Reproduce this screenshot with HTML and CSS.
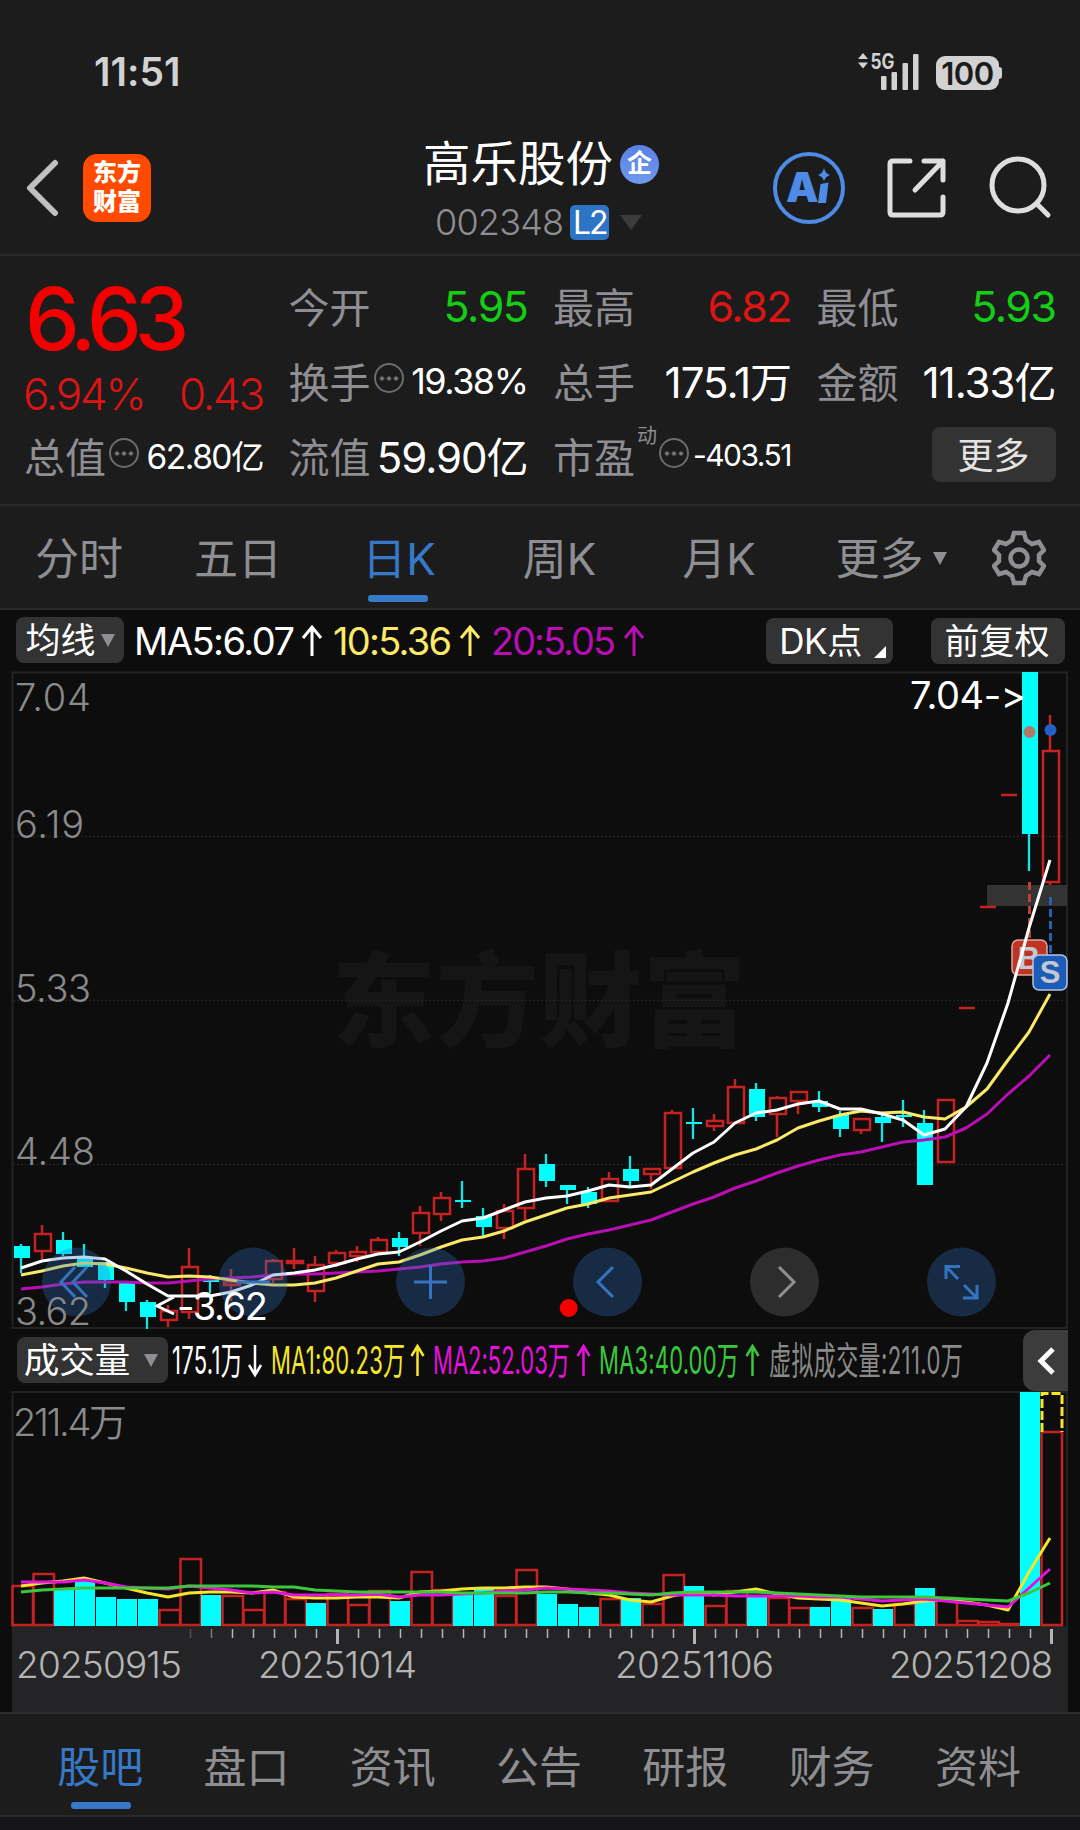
FILE: index.html
```html
<!DOCTYPE html>
<html lang="zh-CN">
<head>
  <meta charset="UTF-8" />
  <meta name="viewport" content="width=device-width, initial-scale=1.0"/>
  <title>高乐股份 002348</title>
  <link rel="stylesheet" href="styles.css">
</head>
<body>

<div class="status-bar">
  <span class="time">11:51</span>
  <div class="status-icons">
    <svg class="signal" width="64" height="40" viewBox="0 0 64 40">
      <path d="M2 9 L7 3 L12 9 Z M2 12.500 L7 18.500 L12 12.500 Z"/>
      <text x="14.500" y="18.500" textLength="24" lengthAdjust="spacingAndGlyphs">5G</text>
      <rect x="25" y="26" width="5.500" height="14" rx="1"/>
      <rect x="35.500" y="22" width="5.500" height="18" rx="1"/>
      <rect x="46.500" y="13" width="5.500" height="27" rx="1"/>
      <rect x="57" y="4" width="5.500" height="36" rx="1"/>
    </svg>
    <div class="battery"><span>100</span></div>
  </div>
</div>

<header class="header">
  <div class="header-left">
    <svg class="back" width="34" height="60" viewBox="0 0 34 60"><path d="M29 5 L4 30 L29 55"/></svg>
    <div class="logo"><span>东方</span><span>财富</span></div>
  </div>
  <div class="header-title">
    <h1>高乐股份<span class="qi">企</span></h1>
    <div class="code"><span>002348</span><span class="l2">L2</span><i class="tri"></i></div>
  </div>
  <div class="header-right">
    <svg width="74" height="74" viewBox="0 0 74 74">
      <circle class="ai-ring" cx="37" cy="37" r="34"/>
      <text class="ai-text" x="14" y="51" textLength="29">A</text>
      <path class="ai-fill" d="M48.500 33 L56.500 31.500 L54 52 L46 52 Z M52 17 Q53.500 22.500 58 24 Q53.500 25.500 52 30 Q50.500 25.500 46 24 Q50.500 22.500 52 17 Z"/>
    </svg>
    <svg class="line-icon" width="62" height="62" viewBox="0 0 62 62">
      <path d="M24 4 H7 Q4 4 4 7 V55 Q4 58 7 58 H54 Q57 58 57 55 V40 M38 4 H57 V23 M57 4 L29 33"/>
    </svg>
    <svg class="line-icon" width="64" height="64" viewBox="0 0 64 64">
      <circle cx="30" cy="29" r="26"/><path d="M49 48 L60 59"/>
    </svg>
  </div>
</header>

<section class="quote">
  <div class="price">6.63</div>
  <div class="change"><span>6.94%</span><span>0.43</span></div>
  <div class="cell open"><label>今开</label><b class="down">5.95</b></div>
  <div class="cell"><label>最高</label><b class="up">6.82</b></div>
  <div class="cell"><label>最低</label><b class="down">5.93</b></div>
  <div class="cell turn"><label>换手</label><i class="more"></i><b class="mid">19.38%</b></div>
  <div class="cell"><label>总手</label><b class="wide">175.1万</b></div>
  <div class="cell"><label>金额</label><b class="wide">11.33亿</b></div>
  <div class="cell"><label>总值</label><i class="more"></i><b class="small">62.80亿</b></div>
  <div class="cell"><label>流值</label><b class="wide">59.90亿</b></div>
  <div class="cell pe"><label>市盈</label><sup>动</sup><i class="more"></i><b class="tiny">-403.51</b></div>
  <div class="cell"><button class="more-btn">更多</button></div>
</section>

<nav class="tabs">
  <a>分时</a><a>五日</a><a class="active">日K</a><a>周K</a><a>月K</a>
  <a>更多<i class="tri"></i></a>
  <svg class="gear" width="54" height="56" viewBox="0 0 54 56">
    <path d="M22 3 H32 L34 10 L40 14 L47 12 L52 20 L47 25 V31 L52 36 L47 44 L40 42 L34 46 L32 53 H22 L20 46 L14 42 L7 44 L2 36 L7 31 V25 L2 20 L7 12 L14 14 L20 10 Z"/>
    <circle cx="27" cy="28" r="8.500"/>
  </svg>
</nav>

<div class="ma-bar">
  <button class="chip">均线<i class="tri"></i></button>
  <svg class="ma-text" width="520" height="54" viewBox="132 612 520 54">
    <text class="white" x="134" y="655" textLength="161">MA5:6.07</text>
    <text class="yellow" x="333" y="655" textLength="119">10:5.36</text>
    <text class="purple" x="491" y="655" textLength="125">20:5.05</text>
    <path class="white" d="M312 656 V628 M303 638 L312 627 L321 638"/>
    <path class="yellow" d="M470 656 V628 M461 638 L470 627 L479 638"/>
    <path class="purple" d="M634 656 V628 M625 638 L634 627 L643 638"/>
  </svg>
  <button class="chip dk">DK点<i class="corner"></i></button>
  <button class="chip fq">前复权</button>
</div>

<svg class="chart" id="kline" width="1080" height="668" viewBox="0 666 1080 668">
  <text class="watermark" x="332" y="1039" textLength="414">东方财富</text>
  <path class="grid" d="M13 836.500 H1066 M13 1000.500 H1066 M13 1164.500 H1066"/>
  <path class="frame" d="M12.500 672.500 H1067 V1328 H12.500 Z"/>
  <rect class="gap" x="987" y="885" width="80" height="21"/>
  <g id="candles"></g>
  <path class="b-dash" d="M1029.500 882 V938"/>
  <path class="s-dash" d="M1050.500 897 V953"/>
  <g class="b-mark"><rect x="1012" y="940" width="35" height="35" rx="6"/><text x="1029" y="969">B</text></g>
  <g id="maLines"></g>
  <g class="s-mark"><rect x="1033" y="955" width="34" height="35" rx="6"/><text x="1050" y="983">S</text></g>
  <circle class="b-dot" cx="1029.500" cy="732" r="6"/>
  <circle class="s-dot" cx="1050.500" cy="730" r="6"/>

  <g class="tools">
    <circle cx="76.500" cy="1282" r="34.500"/><path d="M75 1267 L61 1282 L75 1297 M87 1267 L73 1282 L87 1297"/>
    <circle cx="253" cy="1282" r="34.500"/><path d="M237 1282 H270"/>
    <circle cx="430.500" cy="1282" r="34.500"/><path d="M414 1282 H447 M430.500 1265 V1299"/>
    <circle cx="607.500" cy="1282" r="34.500"/><path d="M613 1267 L598 1282 L613 1297"/>
    <circle class="off" cx="784.500" cy="1282" r="34.500"/><path class="off" d="M779 1267 L794 1282 L779 1297"/>
    <circle cx="961.500" cy="1282" r="34.500"/><path d="M946 1279 V1266.500 H960 M946 1266.500 L958 1279 M963 1298 H977 V1285 M977 1298 L964 1285"/>
  </g>
  <circle class="red-dot" cx="568.700" cy="1308" r="9"/>

  <g class="scale">
    <text x="15" y="711" textLength="76">7.04</text>
    <text x="15" y="838" textLength="69">6.19</text>
    <text x="15" y="1002" textLength="76">5.33</text>
    <text x="15" y="1165" textLength="80">4.48</text>
    <text x="15" y="1325" textLength="76">3.62</text>
  </g>
  <text class="peak" x="910" y="709" textLength="116">7.04-&gt;</text>
  <text class="peak" x="177" y="1320" textLength="91">-3.62</text>
  <path class="low-arrow" d="M174 1297 L157 1306 L174 1314"/>
</svg>

<div class="vol-bar">
  <button class="chip">成交量<i class="tri"></i></button>
  <svg class="vol-text" width="800" height="56" viewBox="170 1332 800 56">
    <text class="white" transform="translate(172 1374) scale(0.58 1)" textLength="122">175.1万</text>
    <text class="bright-yellow" transform="translate(271 1374) scale(0.58 1)" textLength="231">MA1:80.23万</text>
    <text class="magenta" transform="translate(433 1374) scale(0.58 1)" textLength="236">MA2:52.03万</text>
    <text class="green" transform="translate(599 1374) scale(0.58 1)" textLength="241">MA3:40.00万</text>
    <text class="gray" transform="translate(769 1374) scale(0.58 1)" textLength="334">虚拟成交量:211.0万</text>
    <path class="white" d="M255 1345 V1375 M249 1365 L255 1375 L261 1365"/>
    <path class="bright-yellow" d="M417.500 1376 V1346 M411.500 1356 L417.500 1346 L423.500 1356"/>
    <path class="magenta" d="M583.500 1376 V1346 M577.500 1356 L583.500 1346 L589.500 1356"/>
    <path class="green" d="M752.500 1376 V1346 M746.500 1356 L752.500 1346 L758.500 1356"/>
  </svg>
  <button class="drawer"><svg width="20" height="32" viewBox="0 0 20 32"><path d="M16 4 L4 16 L16 28"/></svg></button>
</div>

<svg class="chart" id="volume" width="1080" height="322" viewBox="0 1390 1080 322">
  <path class="frame" d="M12.500 1392 H1067 V1627 H12.500 Z"/>
  <rect class="axis-bg" x="12" y="1628" width="1056" height="84"/>
  <g id="volBars"></g>
  <path class="estimate" d="M1042 1432 V1393.500 H1062 V1432"/>
  <g id="volLines"></g>
  <g id="ticks"></g>
  <g class="scale"><text x="13" y="1436" textLength="114">211.4万</text></g>
  <g class="dates">
    <text x="16" y="1678" textLength="166">20250915</text>
    <text x="258" y="1678" textLength="159">20251014</text>
    <text x="615" y="1678" textLength="159">20251106</text>
    <text x="889" y="1678" textLength="164">20251208</text>
  </g>
</svg>

<nav class="bottom-tabs">
  <a class="active">股吧</a><a>盘口</a><a>资讯</a><a>公告</a><a>研报</a><a>财务</a><a>资料</a>
</nav>

<script src="script.js"></script>
</body>
</html>
```

FILE: styles.css
```css
* {
  box-sizing: border-box;
}
body {
  margin: 0;
  width: 1080px;
  height: 1830px;
  overflow: hidden;
  background: #161618;
  color: #fff;
  font-family: Inter, "Noto Sans CJK SC", sans-serif;
  font-feature-settings: "calt" 0;
}
svg {
  display: block;
  flex: none;
}
button {
  border: none;
  padding: 0;
  color: #fff;
  font-family: inherit;
}
.tri {
  display: inline-block;
  border-style: solid;
  border-color: transparent;
  border-top-color: #8e8e93;
  border-width: 13px 7.5px 0;
}

/* status bar */
.status-bar {
  display: flex;
  justify-content: space-between;
  height: 124px;
  padding: 50px 78px 0 94px;
  background: #1c1c1c;
}
.time {
  font-size: 39px;
  line-height: 44px;
  font-weight: 600;
  letter-spacing: 0;
  color: #d2d2d2;
}
.status-icons {
  display: flex;
  align-items: flex-start;
}
.signal {
  fill: #d2d2d2;
}
.signal text {
  font-size: 21px;
  font-weight: 700;
}
.battery {
  position: relative;
  width: 63px;
  height: 34px;
  margin: 6px 3px 0 16px;
  border-radius: 9px;
  background: #d2d2d2;
  color: #1c1c1c;
  font-size: 31px;
  line-height: 35px;
  font-weight: 600;
  text-align: center;
  letter-spacing: -0.5px;
}
.battery::after {
  content: "";
  position: absolute;
  right: -3px;
  top: 11px;
  width: 4px;
  height: 12px;
  border-radius: 0 3px 3px 0;
  background: #d2d2d2;
}

/* header */
.header {
  display: grid;
  grid-template-columns: 370px 340px 370px;
  height: 132px;
  border-bottom: 2px solid #2a2a2c;
  background: #1c1c1c;
}
.header-left {
  display: flex;
  align-items: flex-start;
  padding: 30px 0 0 26px;
  gap: 23px;
}
.back {
  margin-top: 4px;
  fill: none;
  stroke: #c0c0c0;
  stroke-width: 6;
  stroke-linecap: round;
  stroke-linejoin: round;
}
.logo {
  display: flex;
  flex-direction: column;
  width: 68px;
  height: 68px;
  padding-top: 4px;
  border-radius: 14px;
  background: #ff4a00;
  text-align: center;
  font-size: 24px;
  line-height: 29px;
  font-weight: 900;
}
.header-title {
  padding: 10px 0 0 53px;
}
.header-title h1 {
  display: flex;
  align-items: center;
  margin: 0;
  font-size: 47.5px;
  line-height: 60px;
  font-weight: 400;
}
.qi {
  width: 39px;
  height: 39px;
  margin-left: 7px;
  border-radius: 50%;
  background: linear-gradient(#5a80e6, #7099ee);
  font-size: 25px;
  line-height: 37px;
  font-weight: 700;
  text-align: center;
}
.code {
  display: flex;
  align-items: center;
  height: 36px;
  margin-top: 10px;
  padding-left: 12px;
  font-size: 36px;
  font-weight: 350;
  letter-spacing: -0.8px;
  color: #8e8e93;
}
.l2 {
  width: 39px;
  height: 35px;
  margin-left: 7px;
  border-radius: 5px;
  background: #2e74c4;
  color: #fff;
  font-size: 32px;
  line-height: 36px;
  font-weight: 400;
  letter-spacing: -2px;
  text-align: center;
}
.code .tri {
  margin-left: 11px;
  border-width: 15px 11px 0;
  border-top-color: #3c3c3c;
}
.header-right {
  display: flex;
  align-items: center;
  padding: 0 0 2px 62px;
}
.header-right svg + svg {
  margin-left: 40px;
}
.line-icon {
  fill: none;
  stroke: #dedede;
  stroke-width: 5;
  stroke-linecap: round;
  stroke-linejoin: round;
}
.ai-ring {
  fill: none;
  stroke: #4e8be6;
  stroke-width: 4;
}
.ai-text {
  fill: #4e8be6;
  font-size: 41px;
  font-weight: 900;
}
.ai-fill {
  fill: #4e8be6;
}

/* quote */
.quote {
  display: grid;
  grid-template-columns: 238px 238px 237px 238px;
  grid-template-rows: 75px 75px 75px;
  column-gap: 26.500px;
  height: 250px;
  padding: 12px 0 0 25px;
  border-bottom: 2px solid #2a2a2c;
  background: #1c1c1c;
}
.price {
  grid-area: 1 / 1;
  padding-top: 9px;
  color: #f40000;
  font-size: 87px;
  line-height: 84px;
  font-weight: 550;
  letter-spacing: -7px;
}
.change {
  grid-area: 2 / 1;
  display: flex;
  justify-content: space-between;
  align-items: center;
  padding-top: 26px;
  margin-left: -2px;
  color: #dd1414;
  font-size: 44px;
  font-weight: 350;
  letter-spacing: -2.2px;
}
.cell {
  display: flex;
  align-items: center;
}
.cell label {
  margin: -2px 0 0 -1px;
  font-size: 41px;
  color: #8e8e93;
}
.cell b {
  margin-left: auto;
  font-size: 43px;
  font-weight: 400;
  letter-spacing: -1.5px;
}
.cell .wide {
  margin-top: -2px;
  font-size: 42px;
  letter-spacing: -1px;
}
.cell .mid {
  font-size: 36px;
}
.cell .small {
  margin-top: -3px;
  font-size: 33.5px;
}
.cell .tiny {
  margin-top: -2px;
  font-size: 30px;
}
.cell .up {
  color: #dd1414;
}
.cell .down {
  color: #14cd14;
}
.cell sup {
  align-self: flex-start;
  margin: 6px -1px 0 2px;
  font-size: 20px;
  line-height: 24px;
  color: #8e8e93;
}
.more {
  width: 30px;
  height: 30px;
  margin: -5px 0 0 3px;
  border: 2.5px solid #6b6b70;
  border-radius: 50%;
  background: radial-gradient(circle, #77777c 1.8px, transparent 2.4px) center / 7px 7px repeat-x;
  background-clip: content-box;
  background-origin: content-box;
  padding: 0 2px;
}
.more-btn {
  width: 124px;
  height: 55px;
  margin: -3px 0 0 auto;
  padding-bottom: 3px;
  border-radius: 8px;
  background: #333;
  color: #e4e4e4;
  font-size: 36px;
}

/* period tabs */
.tabs {
  display: grid;
  grid-template-columns: 158px 160px 162px 159px 160px 184px 57px;
  height: 104px;
  border-bottom: 2px solid #2a2a2c;
  background: #1c1c1c;
}
.tabs a {
  position: relative;
  padding-top: 2px;
  text-align: center;
  font-size: 44px;
  line-height: 102px;
  color: #8e8e93;
}
.tabs .active,
.bottom-tabs .active {
  color: #3579c8;
}
.tabs .active::after,
.bottom-tabs .active::after {
  content: "";
  position: absolute;
  left: 50%;
  bottom: 8px;
  width: 60px;
  height: 7px;
  margin-left: -31px;
  border-radius: 3px;
  background: #3579c8;
}
.tabs .tri {
  margin: 0 0 10px 9px;
}
.gear {
  margin: 24px 0 0 9px;
  fill: none;
  stroke: #8e8e93;
  stroke-width: 4.5;
}

/* moving average bar */
.ma-bar,
.vol-bar {
  display: flex;
  background: #0d0d0d;
}
.ma-bar {
  height: 56px;
  padding: 7px 0 0 16px;
}
.chip {
  flex: none;
  width: 108px;
  height: 46px;
  border-radius: 8px;
  background: #333;
  font-size: 35px;
  line-height: 45px;
}
.chip .tri {
  margin: 0 0 6px 5px;
}
.ma-text {
  margin: -5px 0 0 8px;
}
.ma-text text {
  font-size: 38px;
}
.dk {
  position: relative;
  width: 127px;
  margin: 1px 0 0 114px;
  padding-right: 18px;
  letter-spacing: -0.5px;
}
.corner {
  position: absolute;
  right: 7px;
  bottom: 6px;
  border-style: solid;
  border-width: 0 0 12px 12px;
  border-color: transparent transparent #fff;
}
.fq {
  width: 134px;
  margin: 1px 0 0 38px;
  padding-right: 2px;
}
text.white { fill: #fff; }
text.yellow { fill: #fbe96a; }
text.purple { fill: #b80eb4; }
text.bright-yellow { fill: #f5e62c; }
text.magenta { fill: #e412dc; }
text.green { fill: #3cc83c; }
text.gray { fill: #8a8a8a; }
path.white, path.yellow, path.purple, path.bright-yellow, path.magenta, path.green {
  fill: none;
  stroke: #fff;
  stroke-width: 3;
}
path.yellow { stroke: #fbe96a; }
path.purple { stroke: #b80eb4; }
path.bright-yellow { stroke: #f5e62c; }
path.magenta { stroke: #e412dc; }
path.green { stroke: #3cc83c; }

/* charts */
.chart {
  background: #0d0d0d;
}
.frame {
  fill: none;
  stroke: #232323;
  stroke-width: 2;
}
.grid {
  stroke: #222;
  stroke-width: 1.5;
  stroke-dasharray: 2 2;
}
.gap {
  fill: #333;
}
.watermark {
  fill: #151515;
  font-size: 103px;
  font-weight: 900;
}
.rise {
  fill: none;
  stroke: #c62222;
  stroke-width: 2.5;
}
.fall {
  fill: #00ffff;
  stroke: none;
}
.fall-wick {
  stroke: #16e4e4;
  stroke-width: 2.3;
}
.line {
  fill: none;
  stroke-width: 3;
  stroke-linejoin: round;
}
.ma5 { stroke: #fff; }
.ma10 { stroke: #fbe96a; }
.ma20 { stroke: #b80eb4; }
.v1 { stroke: #f5e62c; }
.v2 { stroke: #e412dc; }
.v3 { stroke: #3cc83c; }
.b-dash,
.s-dash {
  stroke: #bf4030;
  stroke-width: 3;
  stroke-dasharray: 8 4;
}
.s-dash {
  stroke: #2460b8;
}
.b-mark rect {
  fill: #c03424;
  stroke: #d8a8a0;
  stroke-width: 1.5;
}
.s-mark rect {
  fill: #1c5cb6;
  stroke: #b4c4e0;
  stroke-width: 1.5;
}
.b-mark text,
.s-mark text {
  fill: #c4c8d0;
  font-family: "Liberation Sans", sans-serif;
  font-size: 31px;
  font-weight: 700;
  text-anchor: middle;
}
.b-dot { fill: #b07868; }
.s-dot { fill: #2460c8; }
.red-dot { fill: #f40000; }
.tools circle {
  fill: #2e74c4;
  fill-opacity: 0.3;
}
.tools path {
  fill: none;
  stroke: #3474be;
  stroke-width: 3;
}
.tools circle.off {
  fill: #2d2d2d;
  fill-opacity: 1;
}
.tools path.off {
  stroke: #8e8e93;
}
.scale text {
  fill: #8a8a8a;
  font-size: 38px;
  font-weight: 350;
}
.peak {
  fill: #fff;
  font-size: 38px;
}
.low-arrow {
  fill: none;
  stroke: #fff;
  stroke-width: 3;
}

/* volume */
.vol-bar {
  height: 56px;
  padding: 3px 0 0 17px;
}
.vol-bar .chip {
  width: 151px;
  padding-right: 3px;
  font-size: 35.5px;
}
.vol-bar .tri {
  margin-left: 14px;
}
.vol-text {
  margin: -5px 0 0 2px;
}
.vol-text text {
  font-size: 38px;
}
.vol-text path {
  stroke-width: 2.5;
}
.drawer {
  display: flex;
  align-items: center;
  width: 45px;
  height: 61px;
  margin: -7px 0 0 53px;
  padding-left: 14px;
  border-radius: 12px 0 0 12px;
  background: #3c3c3c;
  position: relative;
}
.drawer path {
  fill: none;
  stroke: #fff;
  stroke-width: 5;
}
.axis-bg {
  fill: #242426;
}
.estimate {
  fill: none;
  stroke: #f5e62c;
  stroke-width: 3;
  stroke-dasharray: 9 3;
}
.tick {
  stroke: #b4b4b4;
  stroke-width: 1.5;
}
.tick.major {
  stroke-width: 3;
}
.dates text {
  fill: #b4b4b4;
  font-size: 37px;
  font-weight: 350;
}

/* bottom tabs */
.bottom-tabs {
  display: flex;
  height: 105px;
  padding-left: 27px;
  border-top: 2px solid #2d2d2f;
  border-bottom: 2px solid #2a2a2c;
  background: #1c1c1c;
}
.bottom-tabs a {
  position: relative;
  width: 146.300px;
  padding-top: 1px;
  text-align: center;
  font-size: 43px;
  line-height: 105px;
  color: #8e8e93;
}
.bottom-tabs .active::after {
  bottom: 6px;
  margin-left: -29px;
}
```

FILE: script.js
```js
const STEP = 21;

// [direction, body top, body bottom, wick top, wick bottom]
const candles = [
  ['d', 1246, 1258, 1244, 1273], ['u', 1234, 1251, 1225, 1259], ['d', 1240, 1254, 1232, 1256],
  ['d', 1257, 1267, 1244, 1267], ['d', 1262, 1280, 1262, 1288], ['d', 1283, 1302, 1283, 1311],
  ['d', 1302, 1317, 1300, 1329], ['u', 1311, 1320, 1305, 1327], ['u', 1267, 1312, 1248, 1319],
  ['d', 1280, 1282, 1275, 1293], ['u', 1282, 1285, 1269, 1301], ['d', 1281, 1283, 1281, 1283],
  ['u', 1261, 1279, 1259, 1283], ['u', 1261, 1263, 1248, 1269], ['u', 1265, 1291, 1256, 1302],
  ['u', 1253, 1263, 1250, 1267], ['u', 1252, 1256, 1246, 1262], ['u', 1240, 1252, 1237, 1254],
  ['d', 1238, 1247, 1232, 1256], ['u', 1213, 1233, 1206, 1246], ['u', 1198, 1214, 1192, 1221],
  ['d', 1200, 1202, 1181, 1208], ['d', 1216, 1227, 1208, 1238], ['u', 1211, 1228, 1204, 1239],
  ['u', 1169, 1208, 1154, 1220], ['d', 1164, 1181, 1154, 1187], ['d', 1185, 1190, 1185, 1204],
  ['d', 1192, 1204, 1187, 1208], ['u', 1179, 1201, 1172, 1201], ['d', 1169, 1181, 1156, 1187],
  ['u', 1169, 1174, 1168, 1189], ['u', 1113, 1168, 1110, 1168], ['d', 1122, 1124, 1108, 1139],
  ['u', 1121, 1126, 1114, 1131], ['u', 1087, 1123, 1079, 1123], ['d', 1089, 1117, 1083, 1121],
  ['u', 1098, 1114, 1096, 1137], ['u', 1092, 1101, 1092, 1114], ['d', 1101, 1107, 1091, 1112],
  ['d', 1115, 1129, 1111, 1137], ['u', 1119, 1130, 1119, 1134], ['d', 1117, 1123, 1113, 1142],
  ['d', 1115, 1117, 1100, 1127], ['d', 1123, 1185, 1110, 1185], ['u', 1100, 1162, 1100, 1162],
  ['u', 1008, 1008, 1008, 1008], ['u', 907, 907, 907, 907], ['u', 795, 795, 795, 795],
  ['d', 672, 834, 672, 871], ['u', 751, 882, 715, 885]
];

const ma5 = [1268, 1261, 1258, 1257, 1259, 1271, 1284, 1296, 1296, 1296, 1292, 1285, 1275, 1273, 1270, 1265, 1259,
  1254, 1252, 1242, 1231, 1221, 1218, 1210, 1202, 1198, 1196, 1191, 1185, 1187, 1185, 1169, 1153, 1142, 1123, 1113,
  1110, 1104, 1101, 1109, 1109, 1114, 1120, 1135, 1129, 1107, 1063, 1003, 928, 860];
const ma10 = [1275, 1271, 1266, 1263, 1264, 1268, 1273, 1277, 1276, 1277, 1280, 1283, 1285, 1285, 1283, 1278, 1271,
  1264, 1262, 1255, 1247, 1240, 1237, 1231, 1222, 1215, 1208, 1204, 1198, 1195, 1192, 1182, 1172, 1163, 1155, 1149,
  1140, 1128, 1121, 1115, 1111, 1113, 1112, 1117, 1119, 1107, 1089, 1060, 1032, 994];
const ma20 = [1289, 1287, 1284, 1282, 1282, 1282, 1283, 1283, 1281, 1279, 1278, 1277, 1275, 1274, 1274, 1273, 1272,
  1271, 1269, 1267, 1264, 1262, 1261, 1258, 1252, 1246, 1239, 1234, 1230, 1225, 1220, 1212, 1204, 1197, 1188, 1181,
  1173, 1166, 1160, 1155, 1152, 1147, 1142, 1140, 1137, 1128, 1114, 1094, 1076, 1055];

const volTops = [1585, 1573, 1589, 1581, 1597, 1599, 1599, 1609, 1558, 1595, 1595, 1609, 1591, 1598, 1603, 1593, 1604,
  1590, 1601, 1571, 1589, 1594, 1587, 1595, 1569, 1594, 1604, 1607, 1598, 1598, 1603, 1574, 1586, 1605, 1590, 1595,
  1597, 1607, 1607, 1598, 1607, 1609, 1603, 1588, 1597, 1620, 1621, 1623, 1392, 1431];
const volDown = [2, 3, 4, 5, 6, 9, 14, 18, 21, 22, 25, 26, 27, 29, 32, 35, 38, 39, 41, 43, 48];

const vol1 = [1586, 1583, 1581, 1578, 1583, 1588, 1593, 1597, 1593, 1592, 1592, 1593, 1590, 1597, 1598, 1598, 1597,
  1597, 1598, 1592, 1591, 1589, 1588, 1588, 1587, 1587, 1589, 1593, 1595, 1600, 1602, 1596, 1592, 1595, 1592, 1589,
  1594, 1598, 1599, 1600, 1603, 1606, 1604, 1601, 1600, 1602, 1605, 1610, 1572, 1538];
const vol2 = [1582, 1582, 1582, 1580, 1583, 1587, 1588, 1589, 1586, 1588, 1590, 1593, 1592, 1595, 1595, 1595, 1595,
  1594, 1597, 1595, 1595, 1594, 1593, 1591, 1590, 1588, 1589, 1590, 1591, 1593, 1594, 1595, 1595, 1595, 1596, 1596,
  1596, 1596, 1597, 1597, 1599, 1601, 1600, 1599, 1601, 1603, 1605, 1607, 1588, 1569];
const vol3 = [1592, 1590, 1589, 1588, 1588, 1588, 1588, 1588, 1586, 1586, 1586, 1586, 1587, 1587, 1590, 1591, 1592,
  1592, 1592, 1592, 1592, 1593, 1593, 1593, 1593, 1592, 1592, 1593, 1593, 1594, 1595, 1593, 1592, 1592, 1592, 1592,
  1593, 1594, 1595, 1596, 1597, 1597, 1597, 1597, 1598, 1599, 1600, 1601, 1593, 1583];

function line(points, cls) {
  const pts = points.map((y, i) => `${21 + i * STEP},${y}`).join(' ');
  return `<polyline class="line ${cls}" points="${pts}"/>`;
}

document.getElementById('candles').innerHTML = candles.map(([dir, top, bottom, high, low], i) => {
  const x = 21 + i * STEP;
  if (dir === 'd') {
    return `<path class="fall-wick" d="M${x} ${high} V${low}"/>
      <rect class="fall" x="${x - 7}" y="${top}" width="16" height="${bottom - top}"/>`;
  }
  if (top === bottom) {
    return `<path class="rise" d="M${x - 7} ${top} H${x + 9}"/>`;
  }
  return `<path class="rise" d="M${x} ${high} V${top} M${x} ${bottom} V${low}"/>
    <rect class="rise" x="${x - 7}" y="${top}" width="16" height="${bottom - top}"/>`;
}).join('');

document.getElementById('maLines').innerHTML = line(ma20, 'ma20') + line(ma10, 'ma10') + line(ma5, 'ma5');

document.getElementById('volBars').innerHTML = volTops.map((top, i) => {
  const x = 12 + i * STEP;
  if (volDown.includes(i)) {
    return `<rect class="fall" x="${x}" y="${top}" width="20" height="${1626 - top}"/>`;
  }
  return `<rect class="rise" x="${x + 0.5}" y="${top + 1}" width="20.5" height="${1624 - top}"/>`;
}).join('');

document.getElementById('volLines').innerHTML = line(vol1, 'v1') + line(vol2, 'v2') + line(vol3, 'v3');

let ticks = '';
for (let i = 8; i < 50; i++) {
  const major = i === 15 || i === 32 || i === 49;
  const opacity = i === 8 ? 0.3 : i === 9 ? 0.6 : 1;
  ticks += `<path class="tick${major ? ' major' : ''}" opacity="${opacity}" d="M${22.5 + i * STEP} 1629 V${major ? 1644 : 1638}"/>`;
}
document.getElementById('ticks').innerHTML = ticks;
```
